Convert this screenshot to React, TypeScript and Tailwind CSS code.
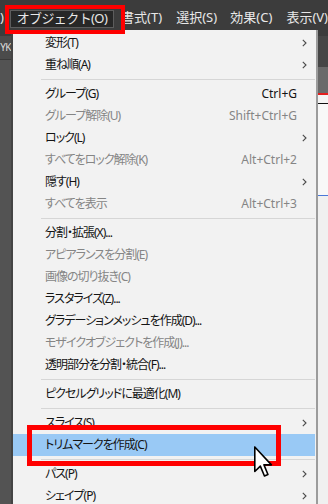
import React from 'react';

type Item = { label: string; key?: string; sub?: boolean; dis?: boolean; hl?: boolean } | 'sep';

const items: Item[] = [
  { label: '変形(T)', sub: true },
  { label: '重ね順(A)', sub: true },
  'sep',
  { label: 'グループ(G)', key: 'Ctrl+G' },
  { label: 'グループ解除(U)', key: 'Shift+Ctrl+G', dis: true },
  { label: 'ロック(L)', sub: true },
  { label: 'すべてをロック解除(K)', key: 'Alt+Ctrl+2', dis: true },
  { label: '隠す(H)', sub: true },
  { label: 'すべてを表示', key: 'Alt+Ctrl+3', dis: true },
  'sep',
  { label: '分割・拡張(X)...' },
  { label: 'アピアランスを分割(E)', dis: true },
  { label: '画像の切り抜き(C)', dis: true },
  { label: 'ラスタライズ(Z)...' },
  { label: 'グラデーションメッシュを作成(D)...' },
  { label: 'モザイクオブジェクトを作成(J)...', dis: true },
  { label: '透明部分を分割・統合(F)...' },
  'sep',
  { label: 'ピクセルグリッドに最適化(M)' },
  'sep',
  { label: 'スライス(S)', sub: true },
  { label: 'トリムマークを作成(C)', hl: true },
  'sep',
  { label: 'パス(P)', sub: true },
  { label: 'シェイプ(P)', sub: true },
];

function Chevron() {
  return (
    <svg width="5" height="8" viewBox="0 0 5 8" fill="none">
      <path d="M0.8 0.8 L4 4 L0.8 7.2" stroke="#4a4a4a" strokeWidth="1.1" />
    </svg>
  );
}

function App() {
  return (
    <div className="relative w-[328px] h-[504px] overflow-hidden bg-[#535353] font-['Noto_Sans','Noto_Sans_CJK_JP',sans-serif]">
      {/* menu bar */}
      <div className="flex items-start h-[30px] pt-[10px] bg-[#3c3c3c] text-[13px] leading-[18px] text-[#e8e8e8] whitespace-nowrap">
        <span className="w-[10px] -mt-[2px]">)</span>
        <span className="w-[108px] h-[18px] bg-[#272727] border border-[#5c5c5c] pl-[6px] leading-[15px] tracking-[-0.6px]">オブジェクト(O)</span>
        <span className="w-[7px]" />
        <span className="w-[57px] -mt-[2px]">書式(T)</span>
        <span className="w-[56px] -mt-[2px]">選択(S)</span>
        <span className="w-[58px] -mt-[2px]">効果(C)</span>
        <span className="-mt-[2px]">表示(V)</span>
      </div>

      <div className="flex h-[474px]">
        {/* left strip */}
        <div className="w-[11px] flex flex-col">
          <div className="h-[6px] bg-[#3c3c3c]" />
          <div className="h-[24px] bg-[#4b4b4b] border-b border-[#3a3a3a] flex items-center justify-end overflow-hidden text-[10px] tracking-[-0.5px] text-[#dcdcdc] whitespace-nowrap">
            <span>YK</span>
          </div>
        </div>

        {/* dropdown */}
        <div className="w-[307px] bg-[#f2f2f2] border-l-2 border-[#444444] border-r-2 border-r-[#9c9c9c] pt-[2px] pr-[1px] text-[12px] [font-feature-settings:'palt']">
          {items.map((it, i) =>
            it === 'sep' ? (
              <div key={i} className="h-[7px] flex items-center pl-[28px]">
                <div className="h-px w-full bg-[#d6d6d6]" />
              </div>
            ) : (
              <div
                key={i}
                className={`h-[22px] flex items-center pl-[32px] pr-[8px] whitespace-nowrap ${
                  it.hl ? 'bg-[#99c9f5]' : ''
                } ${it.dis ? 'text-[#858585]' : 'text-[#141414]'}`}
              >
                <span className="flex-1 tracking-[-1px]">{it.label}</span>
                {it.key && <span className="[font-feature-settings:normal]">{it.key}</span>}
                <span className="w-[10px] flex justify-end">{it.sub && <Chevron />}</span>
              </div>
            )
          )}
        </div>

        {/* right strip */}
        <div className="w-[10px] flex flex-col">
          <div className="h-[6px] bg-[#3c3c3c]" />
          <div className="h-[31px] bg-[#464646]" />
          <div className="h-[26px] bg-[#6a6a6a]" />
          <div className="h-[2px] bg-[#e41e1e]" />
          <div className="h-[8px] bg-[#f4f4f4]" />
          <div className="h-px bg-[#111111]" />
          <div className="h-[91px] bg-[#f8f8f8]" />
          <div className="h-px bg-[#4a78d8]" />
          <div className="flex-1 bg-[#f0f0f0]" />
        </div>
      </div>

      {/* annotation boxes */}
      <div className="absolute left-[5px] top-[5px] w-[120px] h-[29px] border-4 border-[#ff0000]" />
      <div className="absolute left-[27px] top-[425px] w-[254px] h-[41px] border-[5px] border-[#ff0000]" />

      {/* cursor */}
      <svg className="absolute left-[254px] top-[446px]" width="19" height="32" viewBox="0 0 12 20">
        <path
          d="M0.5 0.5 L0.5 16 L4 12.6 L6.6 18.8 L8.8 17.9 L6.3 11.8 L11 11.8 Z"
          fill="#ffffff"
          stroke="#000000"
          strokeWidth="1"
          strokeLinejoin="round"
        />
      </svg>
    </div>
  );
}

export default App;
